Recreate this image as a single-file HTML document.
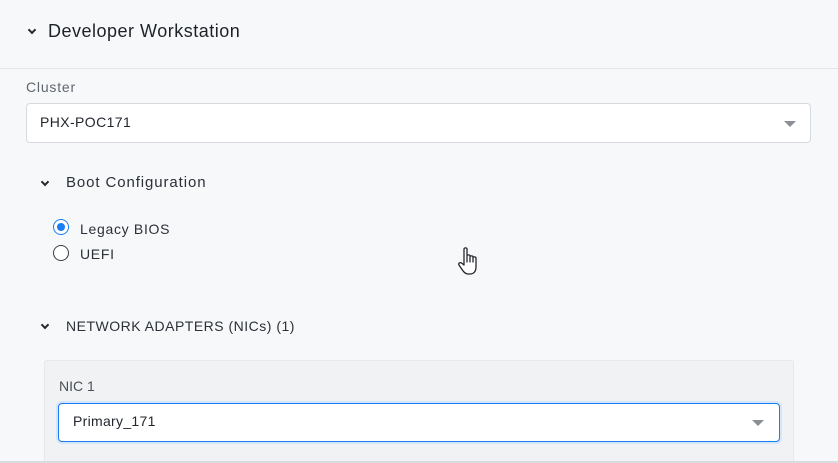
<!DOCTYPE html>
<html><head><style>
*{margin:0;padding:0;box-sizing:border-box}
html,body{width:838px;height:463px;overflow:hidden}
body{background:#f7f8fa;font-family:"Liberation Sans",sans-serif;position:relative;color:#22272e}
.a{position:absolute;white-space:nowrap}
.chev{position:absolute;width:6px;height:6px;border-right:2px solid #22272e;border-bottom:2px solid #22272e;transform:rotate(45deg)}
.sel{position:absolute;background:#fff;border:1px solid #d6d9de;border-radius:4px}
.tri{position:absolute;width:0;height:0;border-left:6px solid transparent;border-right:6px solid transparent;border-top:6px solid #8a8f96}
</style></head><body>
<div class="chev" style="left:29px;top:27px"></div>
<div class="a" style="left:48px;top:21px;font-size:18px;letter-spacing:0.5px;color:#1d2228">Developer Workstation</div>
<div class="a" style="left:0;top:68px;width:838px;height:1px;background:#e3e5e8"></div>
<div class="a" style="left:26px;top:79px;font-size:14px;letter-spacing:0.8px;color:#5f6670">Cluster</div>
<div class="sel" style="left:26px;top:103px;width:785px;height:40px"></div>
<div class="a" style="left:40px;top:114px;font-size:14px;letter-spacing:0.4px;color:#22272e">PHX-POC171</div>
<div class="tri" style="left:784px;top:121px"></div>
<div class="chev" style="left:42px;top:179px;width:6px;height:6px"></div>
<div class="a" style="left:66px;top:174px;font-size:15px;letter-spacing:0.9px;color:#2b3038">Boot Configuration</div>
<div class="a" style="left:53px;top:219px;width:16px;height:16px;border-radius:50%;border:1.5px solid #1b7cf4;background:#fff"></div>
<div class="a" style="left:57px;top:223px;width:8px;height:8px;border-radius:50%;background:#1b7cf4"></div>
<div class="a" style="left:80px;top:221px;font-size:14px;letter-spacing:0.7px;color:#2b3038">Legacy BIOS</div>
<div class="a" style="left:53px;top:245px;width:16px;height:16px;border-radius:50%;border:1.5px solid #3a3f46;background:#fff"></div>
<div class="a" style="left:80px;top:246px;font-size:14px;letter-spacing:0.7px;color:#2b3038">UEFI</div>
<svg class="a" style="left:458px;top:246px" width="28" height="34" viewBox="0 0 28 34"><path d="M6 3c0-1.5 3-1.5 3 0v13V10c0-1.5 3-1.5 3 0v6V11c0-1.5 3-1.5 3 0v5V12c0-1.5 3-1.5 3 0v9c0 4-2 7-6 7h-2c-3 0-5-3-7-6l-2-3c-1-1.5 1-3 2.5-2L6 19z" fill="#fff" stroke="#22272e" stroke-width="1.3" stroke-linejoin="round"/></svg>
<div class="chev" style="left:42px;top:322px;width:6px;height:6px"></div>
<div class="a" style="left:66px;top:318px;font-size:14px;letter-spacing:0.5px;color:#2b3038">NETWORK ADAPTERS (NICs) (1)</div>
<div class="a" style="left:44px;top:360px;width:750px;height:110px;background:#f1f2f4;border:1px solid #e6e8eb;border-radius:3px"></div>
<div class="a" style="left:59px;top:378px;font-size:14px;color:#4a5058">NIC 1</div>
<div class="a" style="left:56px;top:401px;width:726px;height:43px;border-radius:6px;background:#d6e6f9"></div>
<div class="sel" style="left:58px;top:403px;width:722px;height:39px;border-color:#1b7cf4"></div>
<div class="a" style="left:73px;top:413px;font-size:14px;letter-spacing:0.3px;color:#22272e">Primary_171</div>
<div class="tri" style="left:752px;top:420px"></div>
<div class="a" style="left:0;top:461px;width:838px;height:2px;background:#d8dbe0"></div>
</body></html>
